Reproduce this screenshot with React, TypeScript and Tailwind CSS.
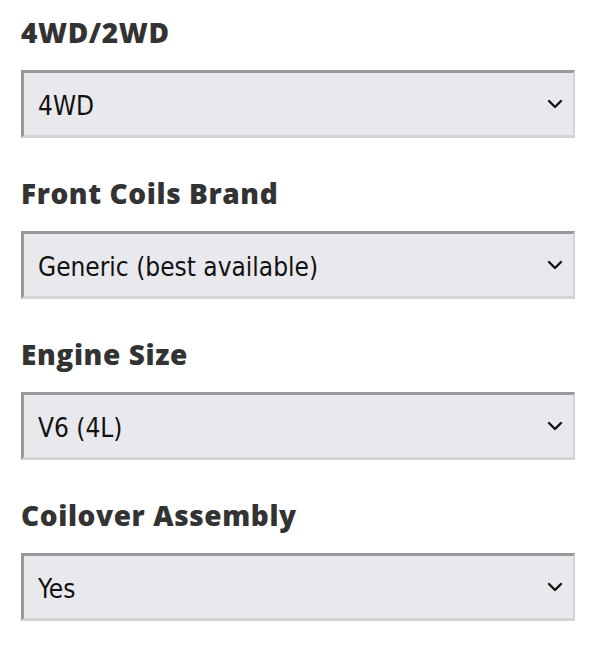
import React, { useState } from 'react';

type Field = { label: string; options: string[] };

const fields: Field[] = [
  { label: '4WD/2WD', options: ['4WD', '2WD'] },
  { label: 'Front Coils Brand', options: ['Generic (best available)', 'King Springs', 'Lovells'] },
  { label: 'Engine Size', options: ['V6 (4L)', 'V8 (4.7L)', '4 Cyl (2.7L)'] },
  { label: 'Coilover Assembly', options: ['Yes', 'No'] },
];

const Chevron = () => (
  <svg width="16" height="10" viewBox="0 0 16 10" className="pointer-events-none absolute right-[12px] top-1/2 -translate-y-1/2">
    <path d="M2 2 L8 8 L14 2" fill="none" stroke="#111" strokeWidth="2.4" strokeLinecap="round" strokeLinejoin="round" />
  </svg>
);

const SelectField: React.FC<{ field: Field }> = ({ field }) => {
  const [value, setValue] = useState(field.options[0]);
  return (
    <div className="mb-[39px]">
      <label className="block mb-[22px] text-[28px] leading-[32px] font-extrabold tracking-[0.6px] text-[#333333] font-['Open_Sans',sans-serif]">
        {field.label}
      </label>
      <div className="relative w-[554px]">
        <select
          value={value}
          onChange={(e) => setValue(e.target.value)}
          className="appearance-none w-full h-[68px] pl-[14px] pr-[40px] pt-[4px] bg-[#e9e9ed] text-[#111] text-[26px] font-['DejaVu_Sans_Condensed','DejaVu_Sans',sans-serif] border-t-[3px] border-l-[3px] border-r-[2px] border-b-[3px] border-t-[#999999] border-l-[#999999] border-r-[#d4d4d4] border-b-[#d4d4d4] outline-none"
        >
          {field.options.map((o) => (
            <option key={o} value={o}>{o}</option>
          ))}
        </select>
        <Chevron />
      </div>
    </div>
  );
};

export default function App() {
  return (
    <div className="w-[607px] h-[649px] bg-white pt-[16px] pl-[21px] overflow-hidden">
      {fields.map((f) => (
        <SelectField key={f.label} field={f} />
      ))}
    </div>
  );
}
